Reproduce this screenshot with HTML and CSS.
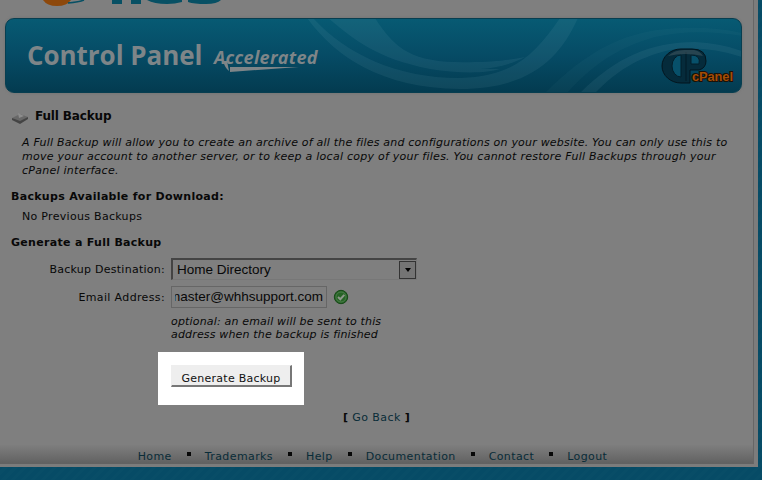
FILE: index.html
```html
<!DOCTYPE html>
<html lang="en">
<head>
<meta charset="utf-8">
<title>Full Backup</title>
<link rel="stylesheet" href="styles.css">
</head>
<body>
<div class="page">
  <div class="sheet">
    <svg class="logo" viewBox="0 0 753 18" width="753" height="18">
      <path d="M43 0Q47 6 57 6Q67 6 71 0Z" fill="#8d480b"/>
      <path d="M68 3Q79 2 84 0" fill="none" stroke="#075064" stroke-width="1.5"/>
      <path d="M112 0h10v4h-10zM131 0h10v4h-10zM147 0h35v2q-7 2-15 2q-13 0-20-4zM188 0h33q-4 4-15 4q-12 0-18-2z" fill="#075064"/>
    </svg>
    <header class="banner">
      <svg class="swirls" viewBox="0 0 737 75" width="737" height="75">
        <g fill="#8fc0cc">
          <path d="M323 0H370C387 26 402 43 450 44C480 45 500 43 520 39C505 47 490 50 475 51L495 51C480 56 450 55 425 51C370 40 350 22 323 0Z" fill-opacity=".09"/>
          <path d="M302 0C330 38 375 70 455 71C525 71 555 40 573 0H555C530 36 510 58 455 60C390 60 340 35 308 0Z" fill-opacity=".09"/>
          <path d="M575 75C610 40 645 24 690 24Q715 25 737 33V39Q700 27 665 32C630 40 610 55 590 75Z" fill-opacity=".09"/>
          <path d="M540 75C580 35 620 10 680 10Q710 9 737 15V18Q690 10 650 19C610 30 585 50 562 75Z" fill-opacity=".04"/>
        </g>
      </svg>
      <h1 class="title">Control Panel</h1>
      <span class="tagline">Accelerated</span>
      <svg class="underline" viewBox="0 0 92 14" width="92" height="14"><path d="M4 2L8 2L10 12Q6 9 4 2Z" fill="#7e8588"/><path d="M11 8L80 8L11 13Z" fill="#7e8588"/></svg>
      <div class="cpanel">
        <svg viewBox="0 0 80 40" width="80" height="40">
          <path d="M21 2H32Q46 2 46 14Q46 21 39 23H30V36H21A19 17 0 0 1 21 2Z" fill="#052b3b" stroke="#03151e"/>
          <path d="M21 8V30A9 11 0 0 1 21 8ZM31 8V17H39Q41 8 31 8Z" fill="#07506a" stroke="#031e2a"/>
          <path d="M26 5V34" stroke="#031a26"/>
          <path d="M8 9Q14 3 24 3H34Q40 4 43 9Q25 5 8 9Z" fill="#52636a" fill-opacity=".45"/>
          <text class="cp-text" x="32" y="34" textLength="41">cPanel</text>
        </svg>
      </div>
    </header>
    <main>
      <h2 class="heading"><svg viewBox="0 0 18 12" width="18" height="12"><path d="M1 6L9 2L17 5L9 11Z" fill="#686868"/><path d="M1 6L9 9L17 5V7L9 12L1 8Z" fill="#444"/><path d="M7 1L13 4L8 6Z" fill="#8d8d8d"/></svg><span>Full Backup</span></h2>
      <p class="intro"><span class="l1">A Full Backup will allow you to create an archive of all the files and configurations on your website. You can only use this to</span><br><span class="l2">move your account to another server, or to keep a local copy of your files. You cannot restore Full Backups through your</span><br><span class="l3">cPanel interface.</span></p>
      <h3 class="sub">Backups Available for Download:</h3>
      <p class="none">No Previous Backups</p>
      <h3 class="sub gen">Generate a Full Backup</h3>
      <div class="row dest"><label>Backup Destination:</label>
        <div class="select"><span>Home Directory</span><i class="drop"></i></div>
      </div>
      <div class="row email"><label>Email Address:</label>
        <div class="input"><span class="value">master@whhsupport.com</span></div>
        <svg class="check" viewBox="0 0 16 16" width="16" height="16"><circle cx="8" cy="8" r="6.7" fill="#276326" stroke="#174918"/><circle cx="8" cy="8" r="5" fill="none" stroke="#528152" stroke-width=".8"/><path d="M5 8L7.3 10.2L11.3 5.8" fill="none" stroke="#8d988b" stroke-width="2"/></svg>
      </div>
      <p class="hint">optional: an email will be sent to this<br>address when the backup is finished</p>
      <div class="spotlight"><button class="generate">Generate Backup</button></div>
      <p class="back"><b>[</b> <a>Go Back</a> <b>]</b></p>
    </main>
    <footer>
      <a>Home</a><i></i><a>Trademarks</a><i></i><a>Help</a><i></i><a>Documentation</a><i></i><a>Contact</a><i></i><a>Logout</a>
    </footer>
  </div>
</div>
</body>
</html>
```
FILE: styles.css
```css
* { box-sizing: border-box; }
body { margin: 0; width: 762px; height: 480px; overflow: hidden; background: repeating-linear-gradient(135deg, #064b66 0 4px, #084d67 4px 7px); font: 11px/14px "DejaVu Sans", sans-serif; letter-spacing: .26px; color: #080808; }
h1, h2, h3, p { margin: 0; }
.page { width: 758px; height: 467px; background: #7c7c7c; }
.sheet { width: 754px; height: 464px; background: #7f7f7f; border-right: 1px solid #666; border-bottom: 1px solid #626262; display: flex; flex-direction: column; }
.logo { display: block; flex: none; }
.banner { position: relative; flex: none; width: 737px; height: 75px; margin-left: 5px; border-radius: 9px; border: 1px solid #073e50; background: linear-gradient(#075a73, #064b65 50%, #033b50); overflow: hidden; box-shadow: 0 0 3px #707070; letter-spacing: 0; }
.swirls { position: absolute; inset: -1px; }
.title { position: absolute; left: 21px; top: 19px; font: 700 26px/34px "Open Sans", sans-serif; letter-spacing: -.05px; color: #7e8588; white-space: nowrap; }
.tagline { position: absolute; left: 208px; top: 26px; font: italic 700 18px/24px "Open Sans", sans-serif; letter-spacing: .3px; color: #7e8588; }
.underline { position: absolute; left: 213px; top: 40px; }
.cpanel { position: absolute; left: 654px; top: 28px; }
.cp-text { font: 700 13px "Liberation Sans", sans-serif; fill: #a44d05; stroke: #1b1007; stroke-width: 2px; paint-order: stroke; }
main { flex: 1; }
.heading { display: flex; align-items: center; gap: 6px; margin: 15px 0 0 11px; font-size: 12px; line-height: 16px; letter-spacing: -.15px; }
.heading svg { margin-top: 4px; }
.intro { margin: 12px 0 0 22px; font-style: italic; white-space: nowrap; }
.l1 { letter-spacing: .205px; }
.l2 { letter-spacing: .255px; }
.sub { margin: 12px 0 0 11px; font-size: 11px; line-height: 14px; letter-spacing: .3px; }
.none { margin: 6px 0 0 22px; letter-spacing: .3px; }
.sub.gen { margin-top: 12px; }
.row { display: flex; align-items: center; }
.row label { width: 165px; padding-top: 1px; text-align: right; margin-right: 6px; }
.dest { margin-top: 8px; }
.select { width: 246px; height: 22px; border: 1px solid #777; border-top: 2px solid #444; border-left: 2px solid #444; display: flex; justify-content: space-between; align-items: center; padding-left: 4px; font: 13.5px/18px "Liberation Sans", sans-serif; letter-spacing: 0; }
.drop { width: 17px; height: 18px; border: 1px solid #333; background: #747474; display: flex; align-items: center; justify-content: center; }
.drop::after { content: ""; border: 3.5px solid transparent; border-top: 4px solid #000; border-bottom: 0; }
.email { margin-top: 6px; }
.email label { letter-spacing: .36px; }
.input { width: 156px; height: 22px; border: 1px solid #666; padding: 1px 3px; font: 13.5px/18px "Liberation Sans", sans-serif; letter-spacing: 0; }
.value { display: flex; justify-content: flex-end; overflow: hidden; white-space: nowrap; }
.check { margin-left: 6px; }
.hint { margin: 7px 0 0 171px; font-style: italic; line-height: 13px; letter-spacing: .17px; }
.spotlight { width: 146px; height: 53px; margin: 11px 0 0 158px; background: #fff; padding: 13px; }
.generate { display: block; width: 121px; height: 22px; padding: 5px 0 0; border: 1px solid #eee; border-right: 2px solid #777; border-bottom: 2px solid #777; background: #eee; color: #111; font: 11px/16px "DejaVu Sans", sans-serif; letter-spacing: .26px; white-space: nowrap; }
.back { margin: 6px 0 0; text-align: center; letter-spacing: .42px; }
a { color: #092c38; }
footer { flex: none; height: 18px; padding: 5px 8px 0 0; display: flex; align-items: center; justify-content: center; letter-spacing: .4px; background: linear-gradient(#7e7e7e, #626262); }
footer i { width: 4px; height: 4px; background: #080808; margin: -5px 14px 0 15px; }
```
